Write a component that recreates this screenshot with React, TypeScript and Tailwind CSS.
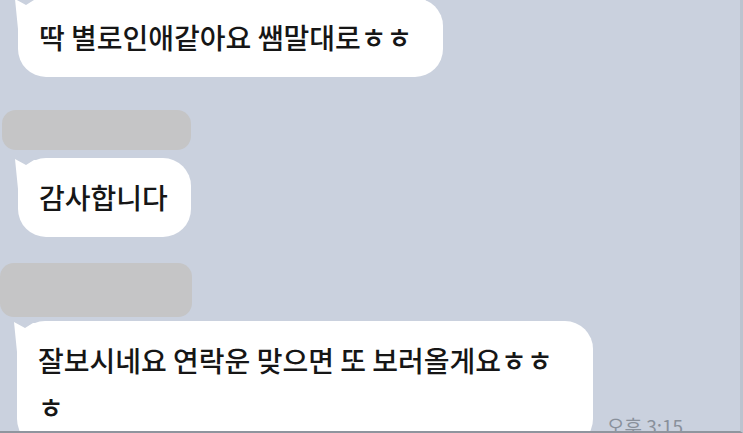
import type { ReactNode } from "react";

const font = { fontFamily: '"Noto Sans CJK KR", "Noto Sans", sans-serif' };

function Tail() {
  return (
    <svg
      className="absolute -left-[3px] top-[1px]"
      width="30"
      height="30"
      viewBox="0 0 30 30"
      aria-hidden
    >
      <polygon points="0,0 11,6 19,1 30,1 30,30 3,30" fill="#ffffff" />
    </svg>
  );
}

function Bubble({ children, className = "" }: { children: ReactNode; className?: string }) {
  return (
    <div className={`relative shrink-0 rounded-[28px] bg-white px-[21px] py-[16px] ${className}`}>
      <Tail />
      <p className="relative text-[28px] font-medium leading-[47px] text-[#161616]">{children}</p>
    </div>
  );
}

function Redacted({ className = "" }: { className?: string }) {
  return <div className={`shrink-0 rounded-[14px] bg-[#c5c5c6] ${className}`} />;
}

export default function App() {
  return (
    <div
      className="relative h-[433px] w-[743px] overflow-hidden border-b-2 border-r-[3px] border-b-[#8f959e] border-r-[#bcc3cf] bg-[#cad1de]"
      style={font}
    >
      <div className="flex flex-col items-start">
        <Bubble className="-mt-[2px] ml-[18px] w-[425px]">딱 별로인애같아요 쌤말대로ㅎㅎ</Bubble>
        <Redacted className="ml-[2px] mt-[33px] h-[40px] w-[189px]" />
        <Bubble className="ml-[18px] mt-[8px] w-[173px]">감사합니다</Bubble>
        <Redacted className="mt-[26px] h-[54px] w-[192px]" />
        <div className="ml-[17px] mt-[4px] flex items-end gap-[14px]">
          <Bubble className="w-[576px]">
            잘보시네요 연락운 맞으면 또 보러올게요ㅎㅎ
            <br />ㅎ
          </Bubble>
          <span className="mb-[9px] whitespace-nowrap text-[19px] leading-[24px] text-[#89909b]">
            오후 3:15
          </span>
        </div>
      </div>
    </div>
  );
}
